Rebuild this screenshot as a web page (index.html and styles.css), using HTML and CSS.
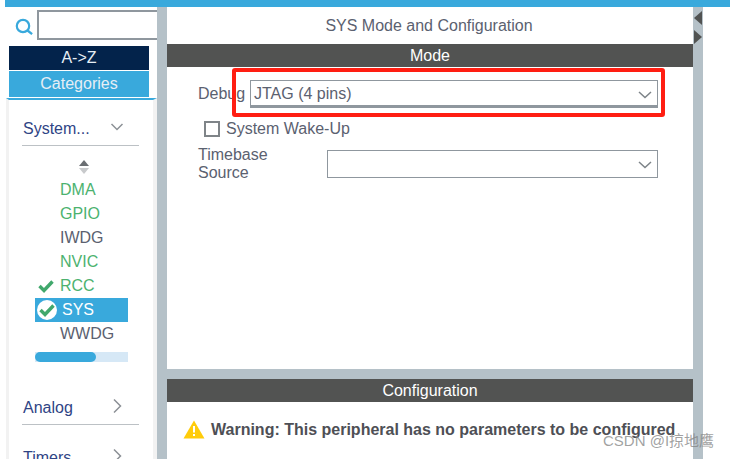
FILE: index.html
```html
<!DOCTYPE html>
<html lang="en">
<head>
<meta charset="utf-8">
<title>SYS Mode and Configuration</title>
<link rel="stylesheet" href="styles.css">
</head>
<body>
<div class="app">
  <div class="topbar"></div>
  <div class="content">
    <aside class="sidebar">
      <div class="search">
        <svg class="search-icon" width="20" height="20" viewBox="0 0 20 20"><circle cx="9" cy="9" r="6.2" fill="none" stroke="#39a9dc" stroke-width="2.2"/><path d="M13.5 13.5l4.6 3.6" stroke="#39a9dc" stroke-width="2.4" fill="none"/></svg>
        <div class="search-box"></div>
      </div>
      <div class="tab tab-dark">A-&gt;Z</div>
      <div class="tab tab-blue">Categories</div>
      <div class="tree">
        <div class="group group-open">
          <span>System...</span>
          <svg class="chev" width="14" height="10" viewBox="0 0 14 10"><path d="M1.5 2l5.5 5.5L12.500 2" fill="none" stroke="#8c9196" stroke-width="1.500"/></svg>
        </div>
        <div class="sorter">
          <svg width="12" height="16" viewBox="0 0 12 16"><path d="M6 1l5 6H1z" fill="#6a6e72"/><path d="M6 15L1 9h10z" fill="#c8cacc"/></svg>
        </div>
        <ul class="items">
          <li class="item ok">DMA</li>
          <li class="item ok">GPIO</li>
          <li class="item">IWDG</li>
          <li class="item ok">NVIC</li>
          <li class="item ok"><svg class="mark" width="16" height="14" viewBox="0 0 16 14"><path d="M1.500 7l4.500 4.500L14.500 2.500" fill="none" stroke="#41a86c" stroke-width="3.400"/></svg>RCC</li>
          <li class="item active"><span class="badge"><svg width="16" height="14" viewBox="0 0 16 14"><path d="M1.500 7l4.500 4.500L14.500 2.500" fill="none" stroke="#41a86c" stroke-width="3.400"/></svg></span>SYS</li>
          <li class="item">WWDG</li>
        </ul>
        <div class="scroller"><div class="scroller-thumb"></div></div>
        <div class="group group-analog">
          <span>Analog</span>
          <svg class="chev-r" width="10" height="16" viewBox="0 0 10 16"><path d="M2 1.500L8.500 8 2 14.500" fill="none" stroke="#8c9196" stroke-width="1.500"/></svg>
        </div>
        <div class="group group-timers">
          <span>Timers</span>
          <svg class="chev-r" width="10" height="16" viewBox="0 0 10 16"><path d="M2 1.500L8.500 8 2 14.500" fill="none" stroke="#8c9196" stroke-width="1.500"/></svg>
        </div>
      </div>
    </aside>
    <main class="main">
      <section class="mode">
        <h1 class="title">SYS Mode and Configuration</h1>
        <h2 class="bar">Mode</h2>
        <div class="form">
          <div class="row row-debug">
            <label class="label label-debug">Debug</label>
            <div class="select select-debug">JTAG (4 pins)<svg class="select-chev" width="14" height="8" viewBox="0 0 14 8"><path d="M1 1l6 5.500L13 1" fill="none" stroke="#7d8388" stroke-width="1.500"/></svg></div>
          </div>
          <div class="row row-check">
            <span class="checkbox"></span>
            <label class="label">System Wake-Up</label>
          </div>
          <div class="row row-time">
            <label class="label label-time">Timebase Source</label>
            <div class="select select-time"><svg class="select-chev" width="14" height="8" viewBox="0 0 14 8"><path d="M1 1l6 5.500L13 1" fill="none" stroke="#7d8388" stroke-width="1.500"/></svg></div>
          </div>
        </div>
      </section>
      <section class="config">
        <h2 class="bar">Configuration</h2>
        <div class="warning">
          <svg width="22" height="19" viewBox="0 0 22 19"><path d="M11 0.500L21.500 18.500H0.500z" fill="#ffcc0a"/><path d="M11 6v6.500" stroke="#fff" stroke-width="2"/><path d="M11 14v2" stroke="#fff" stroke-width="2"/></svg>
          <strong>Warning: This peripheral has no parameters to be configured</strong>
        </div>
      </section>
    </main>
    <div class="rail">
      <svg width="10" height="16" viewBox="0 0 10 16"><path d="M1 8l8-7v14z" fill="#515352"/></svg>
      <svg width="10" height="16" viewBox="0 0 10 16"><path d="M9 8L1 1v14z" fill="#515352"/></svg>
    </div>
  </div>
</div>
<div class="callout"></div>
<div class="watermark">CSDN @I掠地鹰</div>
</body>
</html>
```
FILE: styles.css
```css
* { box-sizing: border-box; }
html, body { margin: 0; padding: 0; }
body {
  width: 730px;
  height: 459px;
  overflow: hidden;
  position: relative;
  background: #fff;
  font-family: "Liberation Sans", Arial, "Noto Sans CJK SC", sans-serif;
  font-size: 16px;
  color: #5b6170;
}
.app { display: flex; flex-direction: column; height: 459px; }
.topbar { height: 7px; margin-left: 5px; background: #39a9dc; flex: none; }
.content { display: flex; flex: 1; margin-left: 5px; min-height: 0; }

.sidebar { width: 152px; flex: none; overflow: hidden; }
.search { display: flex; align-items: center; gap: 3px; height: 33px; padding-top: 3px; padding-left: 9px; }
.search-icon { flex: none; margin-top: 3px; }
.search-box { flex: 1; height: 30px; border: 2px solid #8f979e; border-right: 0; background: #fff; }
.tab { margin-left: 4px; width: 140px; display: flex; align-items: center; justify-content: center; color: #e6eef5; }
.tab-dark { height: 24px; margin-top: 6px; background: #03234b; }
.tab-blue { height: 26px; margin-top: 1px; background: #39a9dc; }

.tree {
  margin: 1px 0 0 1px;
  border-top: 2px solid #39a9dc;
  border-left: 3px solid #f2f2f2;
  border-right: 4px solid #f2f2f2;
  height: 400px;
  width: 151px;
}
.group { display: flex; align-items: center; justify-content: space-between; margin: 0 14px 0 13px; border-bottom: 1px solid #bcc1c5; color: #2f4485; }
.group-open { height: 46px; padding: 13px 15px 0 1px; }
.group-analog { height: 41px; margin-top: 22px; padding: 8px 17px 0 1px; }
.group-timers { height: 41px; margin-top: 0; padding: 24px 17px 0 1px; border-bottom: 0; }
.chev { margin-top: -4px; }
.chev-r { margin-top: -4px; }
.sorter { display: flex; justify-content: center; padding: 13px 0 0 0; margin-left: 5px; height: 32px; }
.items { list-style: none; margin: 0; padding: 0 0 0 26px; width: 119px; }
.item { height: 24px; line-height: 24px; padding-left: 25px; position: relative; }
.ok { color: #4cb26f; }
.mark { position: absolute; left: 3px; top: 5px; }
.active { background: #39a9dc; color: #fff; padding-left: 27px; }
.badge { position: absolute; left: 2px; top: 2px; width: 20px; height: 20px; border-radius: 50%; background: #fff; display: flex; align-items: center; justify-content: center; }
.scroller { margin: 6px 0 0 26px; width: 93px; height: 10px; background: #d6e8f6; }
.scroller-thumb { width: 61px; height: 10px; background: #39a9dc; border-radius: 5px; }

.main { width: 536px; flex: none; background: #b5c1c8; border-left: 10px solid #b5c1c8; display: flex; flex-direction: column; }
.mode { height: 362px; background: #fff; flex: none; }
.title { margin: 0; height: 37px; display: flex; align-items: center; justify-content: center; font-size: 16px; font-weight: 400; padding-right: 2px; }
.bar { margin: 0; height: 23px; background: #525352; color: #fff; font-size: 16px; font-weight: 400; display: flex; align-items: center; justify-content: center; }
.form { padding: 13px 35px 0 31px; }
.row { display: flex; align-items: center; }
.row-debug { height: 28px; }
.label-debug { width: 52px; flex: none; margin-top: 0; }
.select { position: relative; border: 1px solid #8f979e; background: #fff; height: 28px; line-height: 26px; padding-left: 3px; }
.select-debug { width: 408px; border-bottom-width: 3px; }
.select-time { width: 332px; height: 28px; margin-left: 4px; }
.select-chev { position: absolute; right: 5px; top: 10px; }
.row-check { height: 42px; padding-left: 6px; gap: 6px; margin-top: 0; }
.checkbox { width: 16px; height: 16px; border: 2px solid #7f8488; background: #fff; }
.row-time { height: 28px; margin-top: 0; }
.config { flex: 1; margin-top: 10px; background: #fff; }
.warning { display: flex; align-items: center; gap: 6px; padding: 18px 0 0 16px; }
.warning strong { font-weight: 700; color: #4e4f55; white-space: nowrap; }
.rail { width: 10px; flex: none; background: #b5c1c8; display: flex; flex-direction: column; gap: 3px; padding-top: 3px; }

.callout { position: absolute; left: 232px; top: 68px; width: 433px; height: 49px; border: 4px solid #ff1e12; border-radius: 3px; }
.watermark { position: absolute; left: 603px; top: 432px; font-size: 15px; line-height: 18px; color: rgba(130,130,130,.75); white-space: nowrap; }
```
